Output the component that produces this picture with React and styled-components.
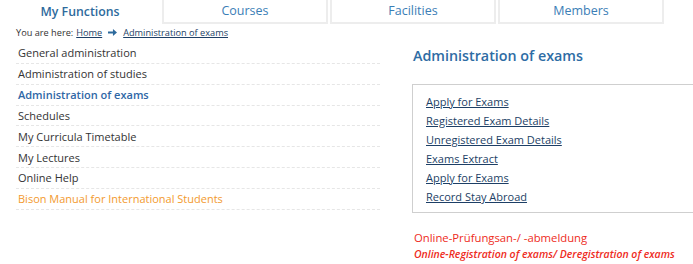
import React from "react";
import styled, { createGlobalStyle } from "styled-components";

const Global = createGlobalStyle`
  html, body { margin: 0; padding: 0; background: #fff; }
  body { font-family: "Open Sans", "Noto Sans", sans-serif; overflow: hidden; }
`;

const Page = styled.div`
  width: 693px;
  height: 264px;
  overflow: hidden;
`;

const Tabs = styled.div`
  display: flex;
  gap: 2px;
  height: 24px;
`;

const Tab = styled.div`
  box-sizing: border-box;
  width: ${(p) => (p.$active ? "160px" : "166px")};
  height: 24px;
  display: flex;
  align-items: center;
  justify-content: center;
  font-size: ${(p) => (p.$active ? "12.3px" : "12.5px")};
  font-weight: ${(p) => (p.$active ? 600 : 400)};
  color: ${(p) => (p.$active ? "#2d6a9c" : "#3b7eb6")};
  border: ${(p) => (p.$active ? "none" : "2px solid #ededed")};
  border-top: none;
  padding-bottom: 1px;
`;

const Crumbs = styled.div`
  display: flex;
  align-items: center;
  gap: 3px;
  padding-left: 16px;
  margin-top: 1px;
  font-size: 9.2px;
  color: #333;
  height: 14px;
`;

const CrumbLink = styled.a`
  color: #1d3f66;
  text-decoration: underline;
`;

const Arrow = styled.svg`
  width: 9px;
  height: 9px;
  margin: 0 3px;
`;

const Body = styled.div`
  display: flex;
  padding-left: 16px;
`;

const Menu = styled.ul`
  list-style: none;
  margin: 0;
  padding: 0;
  width: 364px;
  margin-top: 4px;
`;

const MenuItem = styled.li`
  height: 20.85px;
  box-sizing: border-box;
  padding-left: 2px;
  display: flex;
  align-items: center;
  font-size: 11px;
  border-bottom: 1px dashed #e6e6e6;
  color: ${(p) => (p.$tone === "active" ? "#2f67a6" : p.$tone === "orange" ? "#f39a2e" : "#333")};
  font-weight: ${(p) => (p.$tone === "active" ? 600 : 400)};
`;

const Content = styled.div`
  flex: 1;
  padding-left: 32px;
  margin-top: 6px;
`;

const Heading = styled.h2`
  margin: 0 0 0 1px;
  font-size: 14.3px;
  font-weight: 600;
  color: #2e6ca4;
  height: 21px;
  line-height: 21px;
`;

const LinkBox = styled.div`
  margin-top: 18px;
  border: 1px solid #cfcfcf;
  border-right: none;
  padding: 7px 0 6px 13px;
  display: flex;
  flex-direction: column;
`;

const BoxLink = styled.a`
  font-size: 11px;
  color: #1d3f66;
  text-decoration: underline;
  height: 19px;
  line-height: 19px;
`;

const Notice = styled.div`
  margin-top: 17px;
  padding-left: 2px;
  color: #ee2b22;
  font-size: 11.3px;
  line-height: 16px;
`;

const NoticeItalic = styled.div`
  font-style: italic;
  font-weight: 600;
  font-size: 10.5px;
  white-space: nowrap;
`;

const menu = [
  ["General administration"],
  ["Administration of studies"],
  ["Administration of exams", "active"],
  ["Schedules"],
  ["My Curricula Timetable"],
  ["My Lectures"],
  ["Online Help"],
  ["Bison Manual for International Students", "orange"],
];

const links = [
  "Apply for Exams",
  "Registered Exam Details",
  "Unregistered Exam Details",
  "Exams Extract",
  "Apply for Exams",
  "Record Stay Abroad",
];

export default function App() {
  return (
    <Page>
      <Global />
      <Tabs>
        <Tab $active>My Functions</Tab>
        <Tab>Courses</Tab>
        <Tab>Facilities</Tab>
        <Tab>Members</Tab>
      </Tabs>
      <Crumbs>
        You are here: <CrumbLink>Home</CrumbLink>
        <Arrow viewBox="0 0 10 10">
          <path d="M0 4h5.5V1.2L10 5 5.5 8.8V6H0z" fill="#2d6a9c" />
        </Arrow>
        <CrumbLink>Administration of exams</CrumbLink>
      </Crumbs>
      <Body>
        <Menu>
          {menu.map(([t, tone]) => (
            <MenuItem key={t} $tone={tone}>{t}</MenuItem>
          ))}
        </Menu>
        <Content>
          <Heading>Administration of exams</Heading>
          <LinkBox>
            {links.map((l, i) => (
              <BoxLink key={i}>{l}</BoxLink>
            ))}
          </LinkBox>
          <Notice>
            <div>Online-Prüfungsan-/ -abmeldung</div>
            <NoticeItalic>Online-Registration of exams/ Deregistration of exams</NoticeItalic>
          </Notice>
        </Content>
      </Body>
    </Page>
  );
}
